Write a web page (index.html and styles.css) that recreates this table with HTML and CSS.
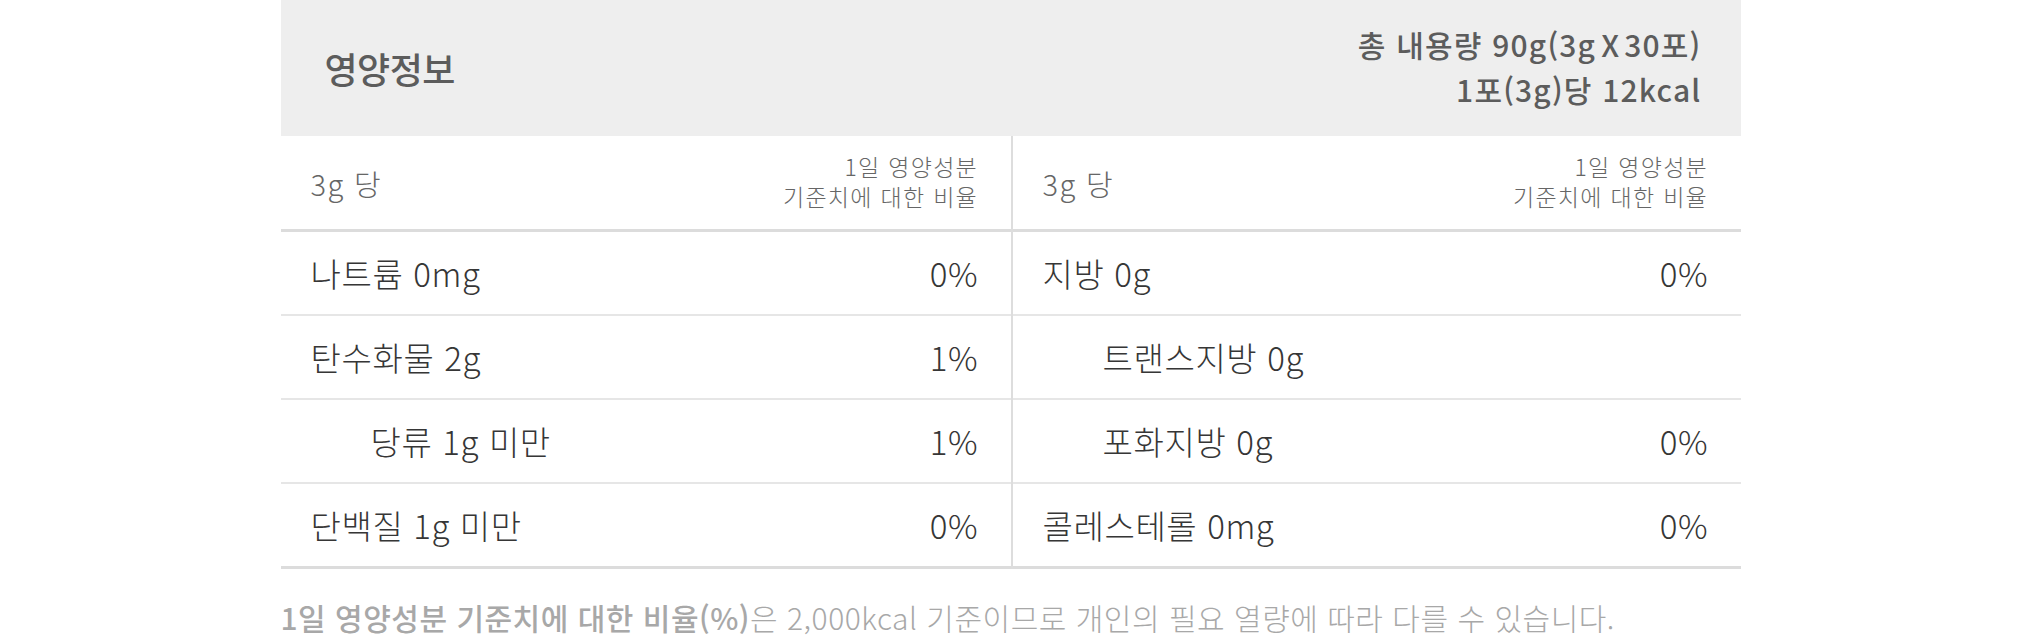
FILE: index.html
```html
<!DOCTYPE html>
<html lang="ko">
<head>
<meta charset="utf-8">
<title>영양정보</title>
<link rel="stylesheet" href="styles.css">
</head>
<body>
<section class="nutri">
  <header class="nutri-head">
    <h2 class="nutri-title">영양정보</h2>
    <div class="nutri-total">
      <p>총 내용량 90g(3g<span class="times">X</span>30포)</p>
      <p>1포(3g)당 12kcal</p>
    </div>
  </header>
  <div class="nutri-cols">
    <div class="nutri-col">
      <div class="row row-head">
        <span class="per">3g 당</span>
        <span class="ratio"><span class="ratio-line">1일 영양성분</span><span class="ratio-line">기준치에 대한 비율</span></span>
      </div>
      <div class="row"><span>나트륨 0mg</span><span>0%</span></div>
      <div class="row"><span>탄수화물 2g</span><span>1%</span></div>
      <div class="row sub"><span>당류 1g 미만</span><span>1%</span></div>
      <div class="row last"><span>단백질 1g 미만</span><span>0%</span></div>
    </div>
    <div class="nutri-col nutri-col-right">
      <div class="row row-head">
        <span class="per">3g 당</span>
        <span class="ratio"><span class="ratio-line">1일 영양성분</span><span class="ratio-line">기준치에 대한 비율</span></span>
      </div>
      <div class="row"><span>지방 0g</span><span>0%</span></div>
      <div class="row sub"><span>트랜스지방 0g</span><span></span></div>
      <div class="row sub"><span>포화지방 0g</span><span>0%</span></div>
      <div class="row last"><span>콜레스테롤 0mg</span><span>0%</span></div>
    </div>
  </div>
  <p class="nutri-note"><strong>1일 영양성분 기준치에 대한 비율(%)</strong>은 2,000kcal 기준이므로 개인의 필요 열량에 따라 다를 수 있습니다.</p>
</section>
</body>
</html>
```

FILE: styles.css
```css
* { box-sizing: border-box; }
html, body { margin: 0; padding: 0; background: #fff; }
body {
  font-family: "Noto Sans CJK KR", "Noto Sans", sans-serif;
  color: #333;
}
.nutri {
  width: 1460px;
  margin: 0 auto;
}
.nutri-head {
  height: 136px;
  background: #eeeeee;
  display: flex;
  align-items: center;
  justify-content: space-between;
  padding: 0 39px 0 44px;
}
.nutri-title {
  margin: 0;
  font-size: 36px;
  font-weight: 500;
  color: #5c5c5c;
  letter-spacing: -0.5px;
}
.nutri-total {
  text-align: right;
  color: #5c5c5c;
  font-size: 30px;
  font-weight: 500;
  line-height: 45px;
  letter-spacing: 1.2px;
  padding-bottom: 2px;
}
.nutri-total p { margin: 0; }
.nutri-total .times { margin: 0 4px 0 5px; }
.nutri-cols {
  display: grid;
  grid-template-columns: 1fr 1fr;
}
.nutri-col-right {
  border-left: 2px solid #dddddd;
}
.row {
  display: flex;
  align-items: center;
  justify-content: space-between;
  height: 84px;
  padding: 0 33px 0 30px;
  border-bottom: 2px solid #e6e6e6;
  font-size: 33px;
  font-weight: 300;
  letter-spacing: 0.6px;
  color: #363636;
}
.row > span:last-child { margin-right: -0.6px; }
.row.sub { padding-left: 90px; }
.row.last { height: 85px; border-bottom: 3px solid #dcdcdc; }
.row-head {
  height: 96px;
  border-bottom: 3px solid #dcdcdc;
  color: #666;
  font-weight: 300;
}
.row-head .per { font-size: 29px; letter-spacing: 1.4px; }
.row-head .ratio {
  display: flex;
  flex-direction: column;
  align-items: flex-end;
  font-size: 23px;
  line-height: 30px;
  letter-spacing: 1.3px;
  padding-bottom: 4px;
}
.nutri-note {
  margin: 28px 0 0;
  font-size: 30px;
  line-height: 40px;
  font-weight: 300;
  color: #a8a8a8;
  letter-spacing: 0.5px;
}
.nutri-note strong { font-weight: 500; }
```
